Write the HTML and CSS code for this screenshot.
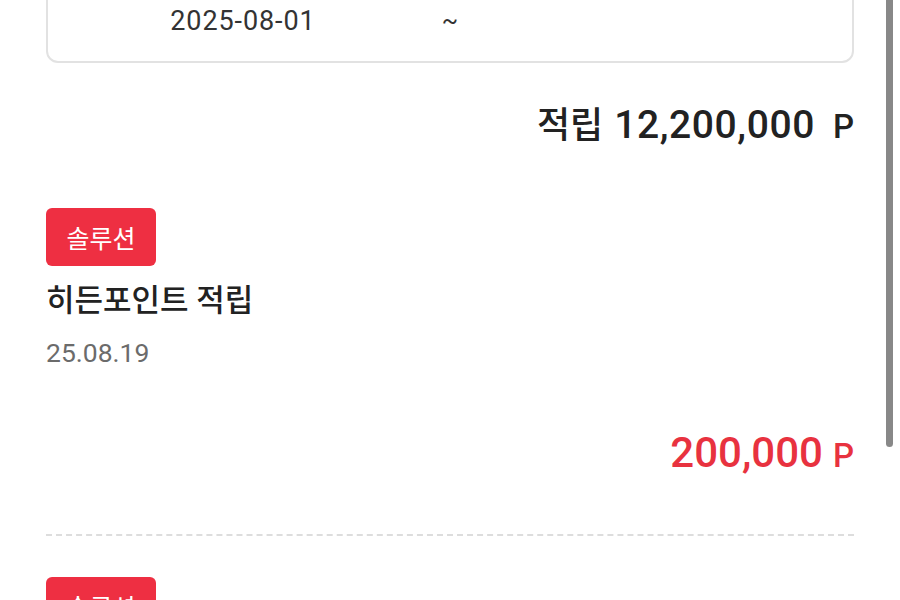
FILE: index.html
```html
<!DOCTYPE html>
<html lang="ko">
<head>
<meta charset="utf-8">
<title>포인트 내역</title>
<link rel="stylesheet" href="styles.css">
</head>
<body>
<div class="page">
  <div class="range">
    <div class="range-date">2025-08-01</div>
    <div class="range-sep">~</div>
    <div class="range-date"></div>
  </div>
  <div class="total">
    <span class="total-label">적립</span>
    <span class="total-num">12,200,000</span>
    <span class="total-unit">P</span>
  </div>
  <div class="item">
    <div class="badge">솔루션</div>
    <div class="item-title">히든포인트 적립</div>
    <div class="item-date">25.08.19</div>
    <div class="item-amount">
      <span class="amount-num">200,000</span>
      <span class="amount-unit">P</span>
    </div>
  </div>
  <div class="item">
    <div class="badge">솔루션</div>
    <div class="item-title">히든포인트 적립</div>
    <div class="item-date">25.08.19</div>
    <div class="item-amount">
      <span class="amount-num">200,000</span>
      <span class="amount-unit">P</span>
    </div>
  </div>
</div>
<div class="scrollbar"></div>
</body>
</html>
```
FILE: styles.css
```css
html, body {
  margin: 0;
  padding: 0;
  background: #ffffff;
  height: 600px;
  overflow: hidden;
}
body {
  font-family: Roboto, "Noto Sans CJK KR", sans-serif;
  color: #222222;
}
.page {
  padding: 0 46px;
}
.range {
  margin-top: -22px;
  height: 81px;
  border: 2px solid #e2e2e2;
  border-radius: 12px;
  display: grid;
  grid-template-columns: 1fr auto 1fr;
  align-items: center;
}
.range-date {
  text-align: center;
  font-size: 27px;
  letter-spacing: 0.9px;
  color: #333333;
  padding-right: 4px;
}
.range-sep {
  font-size: 24px;
  color: #333333;
}
.total {
  margin-top: 42px;
  height: 40px;
  line-height: 40px;
  display: flex;
  justify-content: flex-end;
  align-items: baseline;
  font-weight: 500;
  color: #222222;
  white-space: nowrap;
}
.total-label {
  font-size: 36px;
}
.total-num {
  margin-left: 11px;
  font-size: 39px;
  letter-spacing: 0.6px;
}
.total-unit {
  margin-left: 18px;
  font-size: 33px;
}
.item {
  padding-top: 63px;
  padding-bottom: 59px;
  border-bottom: 2px dashed #dddddd;
}
.item + .item {
  padding-top: 41px;
  border-bottom: none;
}
.badge {
  width: 110px;
  height: 58px;
  border-radius: 6px;
  background: #ee2f42;
  color: #ffffff;
  font-size: 25px;
  display: flex;
  align-items: center;
  justify-content: center;
}
.item-title {
  margin-top: 14px;
  font-size: 31px;
  line-height: 42px;
  font-weight: 500;
  color: #222222;
}
.item-date {
  margin-top: 15px;
  font-size: 26.5px;
  line-height: 32px;
  color: #6b6b6b;
}
.item-amount {
  margin-top: 62px;
  height: 44px;
  line-height: 44px;
  display: flex;
  justify-content: flex-end;
  align-items: baseline;
  color: #e8323f;
  font-weight: 500;
  white-space: nowrap;
}
.amount-num {
  font-size: 42px;
}
.amount-unit {
  margin-left: 10px;
  font-size: 33px;
}
.scrollbar {
  position: fixed;
  top: 0;
  left: 886px;
  width: 7px;
  height: 447px;
  background: #888888;
  border-radius: 0 0 4px 4px;
}
```
